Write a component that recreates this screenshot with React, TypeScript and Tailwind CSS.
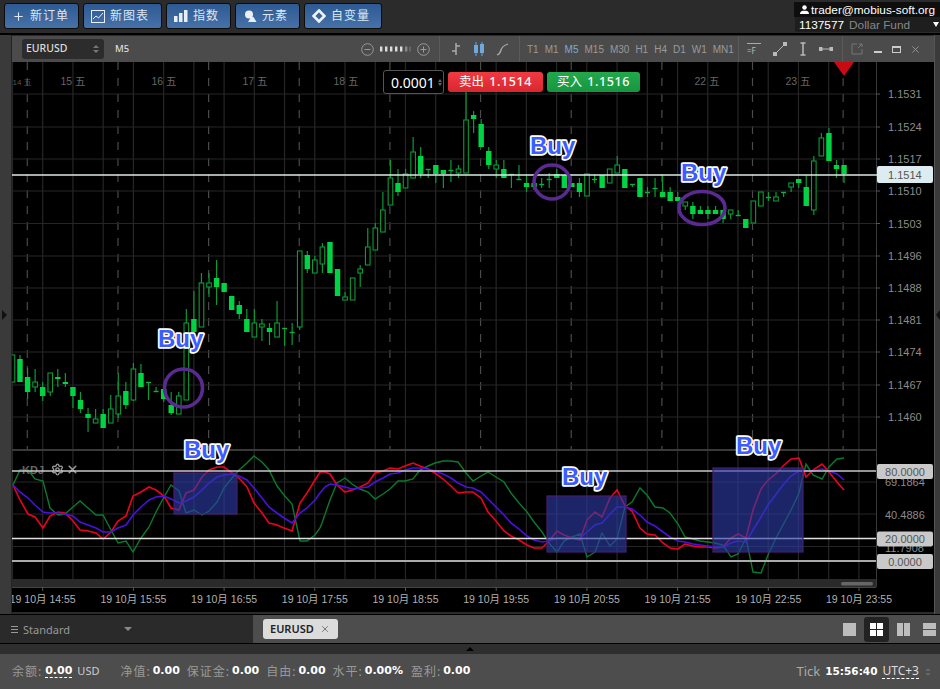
import { Plus, Settings, X } from "lucide-react";

const FONT = "font-['Noto_Sans','Noto_Sans_CJK_SC',sans-serif]";
const BOLD = "font-['DejaVu_Sans','Noto_Sans_CJK_SC',sans-serif] font-bold";
const SVG_FONT = "'Liberation Sans', 'Noto Sans CJK SC', sans-serif";
const STEP = 7.56;
const X0 = 12.45;

// [wickTop, bodyTop, bodyBottom, wickBottom, hollow]
const candles: [number, number, number, number, number][] = [
  [355,355,382,382,1],[355,359,382,382,0],[368,377,392,399,0],[369,382,387,392,1],[382,387,396,401,0],
  [373,373,392,396,1],[369,377,379,387,0],[373,382,384,387,0],[387,387,396,408,0],[392,400,409,413,0],
  [408,414,418,432,0],[409,419,423,423,1],[409,414,428,428,0],[395,409,423,423,1],[373,396,414,418,1],
  [382,391,405,409,0],[363,369,400,401,1],[364,373,387,387,0],[382,382,383,400,0],[387,391,392,392,0],
  [385,389,399,402,0],[392,405,413,415,0],[392,396,414,414,1],[309,323,400,400,1],[291,319,332,332,0],
  [273,283,327,327,1],[273,283,287,297,1],[260,278,287,305,0],[283,283,292,292,0],[296,296,310,310,0],
  [301,305,314,319,0],[309,319,332,332,0],[309,323,337,337,1],[319,324,327,341,1],[323,328,332,345,0],
  [301,323,337,337,1],[328,328,329,346,0],[323,332,333,345,0],[251,251,327,330,1],[251,255,269,273,0],
  [256,260,273,273,1],[243,247,264,273,1],[242,242,273,273,0],[269,269,296,296,0],[292,297,300,300,1],
  [278,278,300,300,1],[265,269,273,287,1],[228,247,265,265,1],[223,228,250,250,1],[192,210,232,232,1],
  [160,178,205,205,1],[169,183,192,196,0],[169,174,188,188,1],[137,152,178,178,1],[147,156,174,178,0],
  [169,169,170,178,0],[165,165,174,183,0],[170,170,174,188,0],[160,170,171,182,0],[165,169,173,178,1],
  [92,120,173,173,1],[111,115,119,133,0],[119,124,147,147,0],[147,151,165,169,0],[160,165,169,178,1],
  [160,169,178,178,0],[174,174,175,188,0],[165,179,180,180,0],[175,183,187,192,0],[180,183,187,190,0],
  [178,184,185,188,0],[173,179,180,188,0],[169,174,178,178,0],[175,175,188,188,0],[183,183,187,187,0],
  [178,183,192,197,0],[174,174,196,196,1],[174,179,180,183,0],[175,175,188,188,0],[169,169,183,183,1],
  [156,165,173,173,1],[169,169,188,188,0],[184,184,185,187,0],[178,178,197,197,0],[187,192,193,197,0],
  [178,188,189,197,0],[175,192,197,197,0],[187,192,201,201,0],[192,197,201,201,0],[202,202,206,210,1],
  [202,206,214,219,0],[206,210,214,214,0],[206,210,214,219,0],[206,210,214,214,0],[210,210,219,223,0],
  [210,210,214,219,1],[210,215,216,216,0],[219,219,228,228,0],[201,201,223,223,1],[192,192,206,206,1],
  [192,197,198,201,0],[192,197,201,201,1],[192,192,193,197,0],[183,183,187,192,1],[179,179,183,188,0],
  [175,187,206,206,0],[156,161,210,215,1],[133,138,156,156,1],[128,133,161,161,0],[160,165,169,178,0],
  [165,165,174,183,0],
];

const red = "13,485 20,500 28,514 35,517 43,528 50,516 58,512 65,513 73,521 80,530 88,531 96,533 103,539 111,532 118,521 126,516 133,496 141,492 149,487 156,490 164,496 171,508 179,510 186,493 194,490 202,477 209,470 217,467 224,467 232,473 239,478 247,487 254,503 262,513 269,523 277,525 284,528 292,531 300,503 307,493 315,480 320,472 325,472 330,474 337,485 345,492 352,490 360,487 368,483 375,473 383,471 390,468 398,469 405,466 413,463 420,466 428,469 435,473 443,479 451,486 458,493 466,492 473,492 481,498 488,512 496,521 504,531 511,536 519,540 527,545 534,548 542,548 549,541 557,531 564,535 572,538 580,540 587,520 595,512 602,517 610,498 617,490 625,506 632,511 640,528 647,534 655,535 663,543 670,548 678,549 685,544 693,546 700,547 708,547 715,548 723,547 731,538 738,534 746,538 753,510 761,489 768,480 777,473 783,466 791,459 799,458 806,477 813,470 822,464 829,472 837,482 844,490";
const blue = "13,485 20,492 28,498 35,505 43,512 50,513 58,513 65,514 73,516 80,522 88,525 96,528 103,532 111,532 118,528 126,525 133,515 141,507 149,500 156,497 164,496 171,499 179,503 186,501 194,497 202,490 209,483 217,477 224,475 232,474 239,476 247,480 254,488 262,498 269,507 277,513 284,518 292,523 300,513 307,508 315,500 320,493 325,487 330,484 337,485 345,487 352,489 360,488 368,487 375,482 383,478 390,474 398,473 405,470 413,468 420,468 428,469 435,471 443,474 451,478 458,483 466,487 473,488 481,492 488,499 496,507 504,515 511,523 519,529 527,536 534,540 542,542 549,541 557,538 564,538 572,538 580,538 587,532 595,525 602,523 610,514 617,507 625,507 632,509 640,515 647,522 655,526 663,532 670,537 678,541 685,542 693,544 700,545 708,546 715,547 723,547 731,543 738,541 746,542 753,530 761,517 768,505 777,493 783,485 791,476 799,471 806,471 813,471 822,469 829,471 837,474 844,480";
const green = "13,485 20,470 28,470 35,479 43,481 50,508 58,515 65,514 73,507 80,501 88,508 96,515 103,515 111,530 118,543 126,541 133,552 141,538 149,527 156,512 164,497 171,485 179,491 186,513 194,510 202,515 209,511 217,502 224,488 232,478 239,470 247,463 254,456 262,462 269,470 277,486 284,495 292,504 300,541 307,541 315,535 320,528 322,523 330,500 337,483 345,478 352,484 360,489 368,492 375,499 383,494 390,489 398,481 405,481 413,479 420,470 428,466 435,463 443,461 451,461 458,462 466,473 473,481 481,476 488,472 496,477 504,482 511,493 519,503 527,512 534,522 542,532 549,543 557,552 564,541 572,537 580,534 587,557 595,552 602,533 610,546 617,539 625,507 632,502 640,488 647,495 655,507 663,508 670,513 678,524 685,537 693,539 700,541 708,542 715,543 723,545 731,557 738,554 746,538 753,572 761,573 768,555 777,536 783,525 791,510 799,493 806,464 813,475 822,479 829,467 837,459 844,458";

const prices: [string, number][] = [
  ["1.1531",94],["1.1524",127],["1.1517",159],["1.1510",191],["1.1503",223.5],["1.1496",256],
  ["1.1488",288],["1.1481",320],["1.1474",352],["1.1467",385],["1.1460",417],
];
const days: [string, number][] = [["15 五",73],["16 五",164],["17 五",255],["18 五",346],["22 五",707],["23 五",798]];
const times = ["14:55","15:55","16:55","17:55","18:55","19:55","20:55","21:55","22:55","23:55"];
const boxes = [[174,473,63,41],[547,496,79,56],[713,468,90,84]];
const buys = [[158,347],[530,154],[681,181],[184,458],[562,485],[736,454]];
const pills: [string, number][] = [["80.0000",471.5],["20.0000",539],["0.0000",561.5]];
const timeframes = ["T1","M1","M5","M15","M30","H1","H4","D1","W1","MN1"];

function Chart() {
  const verticals = Array.from({ length: 29 }, (_, i) => 12.47 + i * 30.23);
  const dashed = Array.from({ length: 10 }, (_, i) => 27.3 + i * 90.65);
  return (
    <svg width={922} height={550} viewBox="12 62 922 550" className="block" fontFamily={SVG_FONT}>
      {/* grid */}
      {verticals.map((x) => <line key={x} x1={x} x2={x} y1={62} y2={579} stroke="#262626" strokeWidth={1.2} />)}
      {dashed.map((x) => <line key={x} x1={x} x2={x} y1={62} y2={449} stroke="#4a4a4a" strokeWidth={1.2} strokeDasharray="8 8" />)}
      {prices.map(([p, y]) => <line key={p} x1={12} x2={876} y1={y} y2={y} stroke="#262626" strokeWidth={1.2} />)}
      {[482, 514, 546.5].map((y) => <line key={y} x1={12} x2={876} y1={y} y2={y} stroke="#262626" strokeWidth={1.2} />)}
      <line x1={12} x2={876} y1={450} y2={450} stroke="#3a3a3a" strokeWidth={2} />
      <line x1={876.5} x2={876.5} y1={62} y2={587} stroke="#3a3a3a" />

      {days.map(([d, x]) => <text key={d} x={x} y={85} textAnchor="middle" fontSize={10.5} fill="#666">{d}</text>)}
      <text x={22} y={85} textAnchor="middle" fontSize={8} fill="#555">14 五</text>

      {/* candles */}
      {candles.map(([wt, t, b, wb, hollow], i) => {
        const x = X0 + i * STEP;
        const doji = b - t <= 1;
        return (
          <g key={i}>
            <line x1={x} x2={x} y1={wt} y2={wb} stroke="#0a9a36" strokeWidth={1.2} />
            {doji ? (
              <line x1={x - 2.5} x2={x + 2.5} y1={t + 0.5} y2={t + 0.5} stroke="#0bb03e" strokeWidth={1.4} />
            ) : hollow ? (
              <rect x={x - 2.3} y={t} width={4.6} height={b - t} fill="#000" stroke="#0a9a36" strokeWidth={1.1} />
            ) : (
              <rect x={x - 2.7} y={t} width={5.4} height={b - t} fill="#00d444" />
            )}
          </g>
        );
      })}

      {/* price line */}
      <line x1={12} x2={878} y1={175} y2={175} stroke="#dcebe6" strokeWidth={1.4} />
      {prices.map(([p, y]) => (
        <g key={p}>
          <line x1={876} x2={880} y1={y} y2={y} stroke="#555" />
          <text x={888} y={y + 4} fontSize={11} fill="#8c8c8c">{p}</text>
        </g>
      ))}
      <rect x={877} y={166} width={56} height={17} rx={2} fill="#dcecf1" />
      <text x={888} y={179} fontSize={11} fill="#555">1.1514</text>

      {/* KDJ */}
      <text x={22} y={474} fontSize={11} fontWeight={700} fill="#666">KDJ</text>
      <Settings x={51} y={463} width={13} height={13} color="#999" strokeWidth={2.6} />
      <X x={66} y={463} width={13} height={13} color="#999" strokeWidth={3} />

      <polyline points={green} fill="none" stroke="#0a7a2c" strokeWidth={1.4} />
      <polyline points={red} fill="none" stroke="#f00020" strokeWidth={1.6} />
      <polyline points={blue} fill="none" stroke="#4a10e0" strokeWidth={1.6} />

      <line x1={12} x2={876} y1={471} y2={471} stroke="#c8c8c8" strokeWidth={1.3} />
      <line x1={12} x2={876} y1={538.5} y2={538.5} stroke="#e0e0e0" strokeWidth={1.3} />
      <line x1={12} x2={876} y1={561} y2={561} stroke="#aaa" strokeWidth={1.8} />

      {boxes.map(([x, y, w, h]) => (
        <rect key={x} x={x} y={y} width={w} height={h} fill="#2c3ca8" fillOpacity={0.62} stroke="#4a1f70" strokeWidth={1.2} />
      ))}

      {/* indicator axis */}
      <text x={885} y={486} fontSize={11} fill="#8c8c8c">69.1864</text>
      <text x={885} y={519} fontSize={11} fill="#8c8c8c">40.4886</text>
      <text x={885} y={552} fontSize={11} fill="#8c8c8c">11.7908</text>
      {pills.map(([p, y]) => (
        <g key={p}>
          <rect x={877} y={y - 7.5} width={56} height={15} rx={2} fill="#c9c9c9" />
          <text x={905} y={y + 4} textAnchor="middle" fontSize={11} fill="#555">{p}</text>
        </g>
      ))}

      {/* scroll strip and time axis */}
      <rect x={12} y={579} width={864} height={8} fill="#2a2a2a" />
      <rect x={841} y={582} width={32} height={3.5} rx={1.7} fill="#666" />
      <line x1={12} x2={876} y1={587.5} y2={587.5} stroke="#444" />
      {times.map((t, i) => {
        const x = 42.7 + i * 90.7;
        return (
          <g key={t}>
            <line x1={x} x2={x} y1={587} y2={591} stroke="#555" />
            <text x={x} y={603} textAnchor="middle" fontSize={10.5} fill="#b0b0b0">19 10月 {t}</text>
          </g>
        );
      })}

      {/* hand drawn marks */}
      <path d="M834 62h20l-10 14z" fill="#c80a14" />
      <circle cx={183.5} cy={388} r={19} fill="none" stroke="#5a2a90" strokeWidth={3.6} />
      <ellipse cx={552} cy={182} rx={18} ry={17} fill="none" stroke="#5a2a90" strokeWidth={3.6} />
      <ellipse cx={702} cy={208} rx={23} ry={16.5} fill="none" stroke="#5a2a90" strokeWidth={3.6} />
      {buys.map(([x, y]) => (
        <text key={x} x={x} y={y} fontFamily="'Liberation Sans', sans-serif" fontSize={24} fontWeight={700} fill="#3d5cff" stroke="#fff" strokeWidth={3.4} strokeLinejoin="round" paintOrder="stroke">Buy</text>
      ))}
    </svg>
  );
}

function NavButton({ icon, label, width }: { icon: React.ReactNode; label: string; width: string }) {
  return (
    <button className={`${width} h-[26px] flex items-center gap-[5px] pl-[7px] rounded-[3px] border border-[#0c0c0c] bg-gradient-to-b from-[#2d5a92] to-[#4672a8] text-[12px] tracking-[1px] text-[#dfe7f0]`}>
      {icon}
      {label}
    </button>
  );
}

function Toolbar() {
  return (
    <div className="h-[26px] flex items-center bg-[#4b4b4b] text-[#999]">
      <div className="w-[428px] h-full flex items-center pl-[10px] border-r border-[#5a5a5a]">
        <div className="w-[82px] h-[20px] rounded-[3px] bg-[#2c2c2c] flex items-center justify-between pl-[4px] pr-[5px] text-[10.5px] font-medium text-[#ddd]">
          EURUSD
          <span className="flex flex-col gap-[2px]">
            <span className="w-0 h-0 border-x-[3px] border-x-transparent border-b-[3px] border-b-[#777]" />
            <span className="w-0 h-0 border-x-[3px] border-x-transparent border-t-[3px] border-t-[#777]" />
          </span>
        </div>
        <span className="ml-[11px] text-[9.5px] font-medium text-[#ddd]">M5</span>
        <div className="ml-auto mr-[9px] flex items-center gap-[6px]">
          <svg width="13" height="13" viewBox="0 0 13 13" fill="none" stroke="#999"><circle cx="6.5" cy="6.5" r="5.8" /><path d="M3.5 6.5h6" /></svg>
          <svg width="31" height="6" viewBox="0 0 31 6">
            {[0, 5, 10, 15, 20].map((x) => <rect key={x} x={x} y="0.5" width="2.4" height="5" fill="#ddd" />)}
            <rect x="25" y="0.5" width="2.4" height="5" fill="#888" /><rect x="29" y="0.5" width="2" height="5" fill="#666" />
          </svg>
          <svg width="13" height="13" viewBox="0 0 13 13" fill="none" stroke="#999"><circle cx="6.5" cy="6.5" r="5.8" /><path d="M3.5 6.5h6M6.5 3.5v6" /></svg>
        </div>
      </div>
      <div className="w-[80px] h-full flex items-center justify-between px-[10px] border-r border-[#5a5a5a]">
        <svg width="12" height="14" viewBox="0 0 12 14" fill="none" stroke="#aaa" strokeWidth="1.5"><path d="M6 1v12M2 9h4M6 4h4" /></svg>
        <svg width="12" height="16" viewBox="0 0 12 16"><path d="M3 1v14M9 1v14" stroke="#6fa8dc" /><rect x="1" y="4" width="4" height="8" fill="#6fa8dc" /><rect x="7" y="3" width="4" height="9" fill="#6fa8dc" /></svg>
        <svg width="13" height="13" viewBox="0 0 13 13" fill="none" stroke="#aaa" strokeWidth="1.3"><path d="M1 12q3-1 4-5t7-6" /></svg>
      </div>
      <div className="w-[219px] h-full flex items-center gap-[6px] pl-[7px] font-['Liberation_Sans',sans-serif] text-[10px] border-r border-[#5a5a5a]">
        {timeframes.map((t) => <span key={t} className={t === "M5" ? "text-[#7aa9dc]" : ""}>{t}</span>)}
      </div>
      <div className="w-[104px] h-full flex items-center justify-between pl-[8px] pr-[9px] border-r border-[#5a5a5a]">
        <span className="relative w-[14px] h-[13px] border-t border-[#aaa]"><span className="absolute left-0 top-[2px] text-[8px] leading-[10px] text-[#bbb]">=F</span></span>
        <svg width="14" height="14" viewBox="0 0 14 14" stroke="#bbb" fill="#bbb"><path d="M2 12L12 2" /><rect x="0.5" y="10.5" width="3" height="3" /><rect x="10.5" y="0.5" width="3" height="3" /></svg>
        <svg width="8" height="14" viewBox="0 0 8 14" stroke="#bbb" strokeWidth="1.5"><path d="M4 1v12M1.5 1h5M1.5 13h5" /></svg>
        <svg width="14" height="6" viewBox="0 0 14 6" stroke="#bbb" fill="#bbb"><path d="M1 3h12" /><rect x="0" y="1.5" width="3" height="3" /><rect x="11" y="1.5" width="3" height="3" /></svg>
      </div>
      <div className="flex-1 h-full flex items-center gap-[9px] pl-[8px]">
        <svg width="12" height="12" viewBox="0 0 12 12" fill="none" stroke="#777"><path d="M6 1H1v10h10V6M7 5l4-4M8 1h3v3" /></svg>
        <span className="w-[8px] h-[2px] mt-[6px] ml-[2px] bg-[#ccc]" />
        <span className="w-[9px] h-[7px] ml-[1px] border border-t-2 border-[#ccc]" />
        <X size={11} color="#999" />
      </div>
    </div>
  );
}

export default function App() {
  return (
    <div className={`${FONT} w-[940px] h-[689px] flex flex-col overflow-hidden bg-[#2b2b2b]`}>
      <header className="h-[35px] flex items-start justify-between border-b-2 border-black">
        <div className="flex gap-[4px] pl-[4px] pt-[3px]">
          <NavButton width="w-[75px]" icon={<Plus size={13} />} label="新订单" />
          <NavButton width="w-[79px]" label="新图表" icon={<svg width="14" height="13" viewBox="0 0 14 13" fill="none" stroke="#e8eef5"><rect x="0.5" y="0.5" width="13" height="12" /><path d="M2 9l3-3 2.5 2L12 3" /></svg>} />
          <NavButton width="w-[65px]" label="指数" icon={<svg width="14" height="12" viewBox="0 0 14 12" fill="#e8eef5"><rect x="0" y="6" width="3.5" height="6" /><rect x="5" y="3" width="3.5" height="9" /><rect x="10" y="0" width="3.5" height="12" /></svg>} />
          <NavButton width="w-[65px]" label="元素" icon={<svg width="14" height="13" viewBox="0 0 14 13" fill="#e8eef5"><circle cx="6" cy="4.5" r="4" /><path d="M5 12l3-5h2.5l3 5z" /></svg>} />
          <NavButton width="w-[78px]" label="自变量" icon={<svg width="14" height="14" viewBox="0 0 14 14" fill="none" stroke="#f0f4f8" strokeWidth="2.6"><path d="M7 1.5L12.5 7 7 12.5 1.5 7z" /></svg>} />
        </div>
        <div className="w-[146px] mt-[2px] font-['Liberation_Sans',sans-serif] text-[11.8px] leading-[16px] whitespace-nowrap">
          <div className="h-[15px] bg-[#0e0e0e] flex items-center gap-[2px] pl-[6px] text-white">
            <svg width="9" height="9" viewBox="0 0 10 10" fill="#fff"><circle cx="5" cy="2.7" r="2.5" /><path d="M0 10q0-3 3.5-3.5h3Q10 7 10 10z" /></svg>
            trader@mobius-soft.org
          </div>
          <div className="h-[15px] bg-[#1e1e1e] flex items-center ml-[1px] pl-[4px] text-white">
            1137577
            <span className="ml-[5px] text-[#888]">Dollar Fund</span>
            <span className="ml-auto mr-[1px] w-0 h-0 border-x-[3.5px] border-x-transparent border-t-[5px] border-t-white" />
          </div>
        </div>
      </header>

      <main className="h-[579px] flex">
        <div className="w-[12px] flex items-center bg-[#3a3a3a] border-r border-[#222]">
          <span className="ml-[2px] mt-[-20px] w-0 h-0 border-y-[5px] border-y-transparent border-l-[5px] border-l-[#111]" />
        </div>
        <div className="w-[922px] pt-[1px]">
          <Toolbar />
          <div className="relative h-[550px] bg-black overflow-hidden">
            <Chart />
            {/* order widget */}
            <div className="absolute left-[371px] top-[8px] flex items-center gap-[4px]">
              <div className="w-[61px] h-[24px] rounded-[3px] bg-black border border-[#555] flex items-center justify-between pl-[7px] pr-[1px] text-[14px] text-white">
                0.0001
                <span className="flex flex-col gap-[1px]">
                  <span className="w-0 h-0 border-x-[2px] border-x-transparent border-b-[3px] border-b-[#666]" />
                  <span className="w-0 h-0 border-x-[2px] border-x-transparent border-t-[3px] border-t-[#666]" />
                </span>
              </div>
              <div className="w-[95px] h-[20px] rounded-[3px] bg-gradient-to-b from-[#f03a42] to-[#d9272f] flex items-center justify-center gap-[5px] text-[12.5px] text-white">卖出 <span className="font-medium tracking-[0.6px]">1.1514</span></div>
              <div className="w-[93px] h-[20px] rounded-[3px] bg-gradient-to-b from-[#23a84c] to-[#169640] flex items-center justify-center gap-[5px] text-[12.5px] text-white">买入 <span className="font-medium tracking-[0.6px]">1.1516</span></div>
            </div>
          </div>
        </div>
        <div className="w-[6px] flex items-center bg-[#3a3a3a] border-l border-[#555]">
          <span className="ml-[1px] mt-[-20px] w-0 h-0 border-y-[5px] border-y-transparent border-r-[4px] border-r-[#111]" />
        </div>
      </main>

      <div className="h-[30px] flex border-y border-black">
        <div className="w-[253px] flex items-center bg-[#2a2a2a] pl-[11px] text-[11px] text-[#999]">
          <span className="w-[7px] h-[7px] border-y border-[#999] flex items-center"><span className="w-full h-px bg-[#999]" /></span>
          <span className="ml-[5px] pt-[2px]">Standard</span>
          <span className="ml-[54px] w-0 h-0 border-x-[4px] border-x-transparent border-t-[4px] border-t-[#888]" />
        </div>
        <div className="flex-1 flex items-center bg-[#4d4d4d] pl-[10px] pr-[4px]">
          <div className="w-[75px] h-[20px] rounded-[3px] bg-[#dcdcdc] flex items-center pl-[7px] gap-[6px] text-[11px] font-semibold text-[#222]">
            EURUSD
            <X size={10} color="#666" />
          </div>
          <div className="ml-auto flex items-center">
            <span className="w-[13px] h-[13px] bg-[#bdbdbd]" />
            <span className="ml-[8px] w-[25px] h-[25px] rounded-[3px] bg-[#222] grid place-items-center">
              <span className="w-[13px] h-[13px] grid grid-cols-2 gap-px">
                <i className="bg-white" /><i className="bg-white" /><i className="bg-white" /><i className="bg-white" />
              </span>
            </span>
            <span className="ml-[8px] w-[13px] h-[13px] grid grid-cols-2 gap-px"><i className="bg-[#bdbdbd]" /><i className="bg-[#bdbdbd]" /></span>
            <span className="ml-[13px] w-[13px] h-[13px] grid grid-rows-2 gap-px"><i className="bg-[#bdbdbd]" /><i className="bg-[#bdbdbd]" /></span>
          </div>
        </div>
      </div>

      <div className="h-[10px] flex justify-center items-center bg-[#2e2e2e]">
        <span className="w-0 h-0 border-x-[4px] border-x-transparent border-b-[4px] border-b-black" />
      </div>

      <footer className="h-[35px] flex items-center bg-[#4d4d4d] pl-[12px] pr-[9px] text-[12px] tracking-[1px] text-[#999]">
        <span>余额:</span>
        <b className={`${BOLD} ml-[3px] text-[11px] tracking-normal text-white border-b border-dashed border-white leading-[12px]`}>0.00</b>
        <span className="ml-[5px] text-[11px] tracking-normal text-[#ccc]">USD</span>
        <span className="ml-[21px]">净值:</span><b className={`${BOLD} ml-[2px] text-[11px] tracking-normal text-white`}>0.00</b>
        <span className="ml-[7px]">保证金:</span><b className={`${BOLD} ml-[2px] text-[11px] tracking-normal text-white`}>0.00</b>
        <span className="ml-[7px]">自由:</span><b className={`${BOLD} ml-[2px] text-[11px] tracking-normal text-white`}>0.00</b>
        <span className="ml-[7px]">水平:</span><b className={`${BOLD} ml-[2px] text-[11px] tracking-normal text-white`}>0.00%</b>
        <span className="ml-[8px]">盈利:</span><b className={`${BOLD} ml-[2px] text-[11px] tracking-normal text-white`}>0.00</b>
        <span className="ml-auto text-[13px] tracking-normal text-[#aaa]">Tick</span>
        <b className={`${BOLD} ml-[5px] text-[10.5px] tracking-normal text-white`}>15:56:40</b>
        <span className="ml-[5px] text-[12px] tracking-normal text-[#ddd] border-b border-dashed border-white leading-[14px]">UTC+3</span>
        <span className="ml-[6px] flex flex-col gap-[2px]">
          <span className="w-0 h-0 border-x-[3px] border-x-transparent border-b-[3px] border-b-[#666]" />
          <span className="w-0 h-0 border-x-[3px] border-x-transparent border-t-[3px] border-t-[#666]" />
        </span>
      </footer>
    </div>
  );
}
